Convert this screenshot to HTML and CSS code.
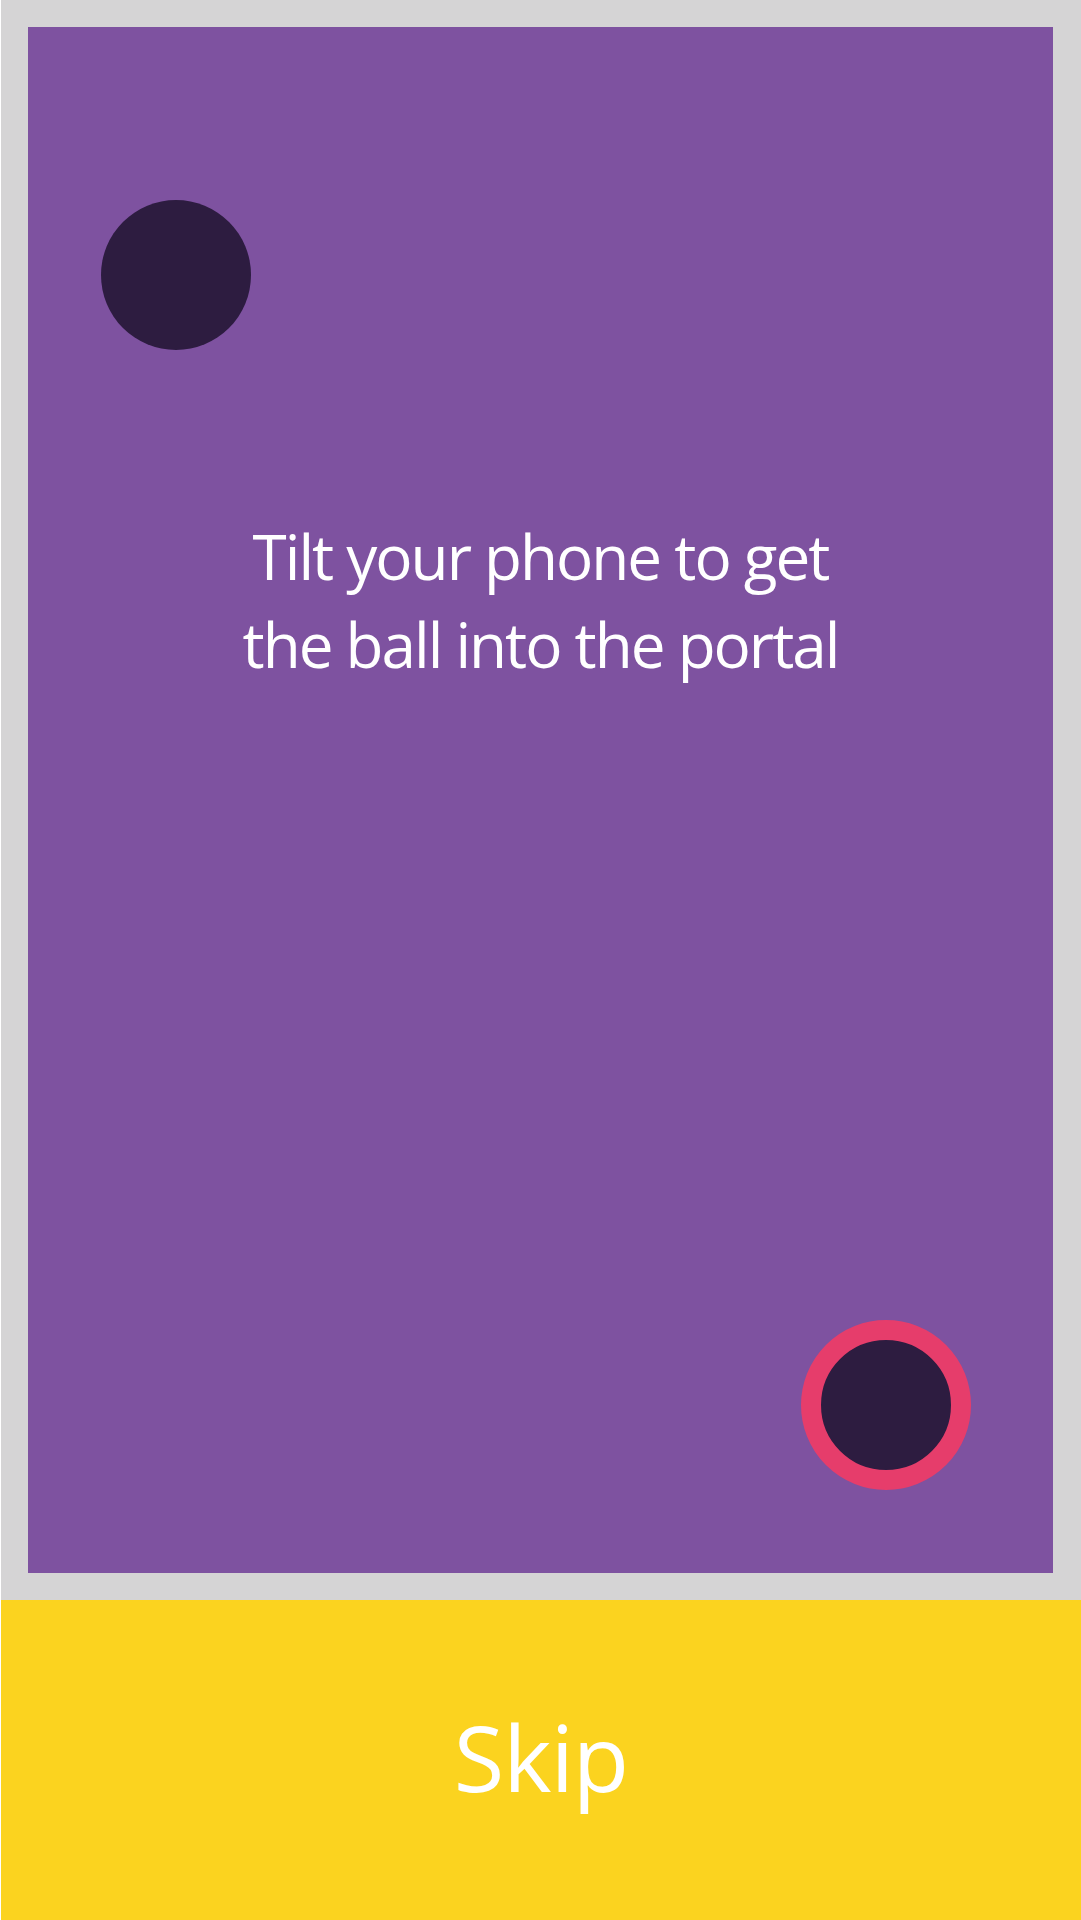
FILE: index.html
```html
<!DOCTYPE html>
<html>
<head>
<meta charset="utf-8">
<link rel="stylesheet" href="styles.css">
</head>
<body>
<div class="screen">
  <div class="frame">
    <div class="board">
      <div class="ball"></div>
      <p class="hint">Tilt your phone to get<br>the ball into the portal</p>
      <div class="portal"></div>
    </div>
  </div>
  <div class="skip">Skip</div>
</div>
</body>
</html>
```
FILE: styles.css
```css
html, body {
  margin: 0;
  padding: 0;
  background: #ffffff;
}
.screen {
  width: 1080px;
  height: 1920px;
  margin-left: 1px;
  display: flex;
  flex-direction: column;
  font-family: "Open Sans", "Noto Sans", sans-serif;
  color: #ffffff;
}
.frame {
  height: 1600px;
  box-sizing: border-box;
  background: #d5d4d5;
  padding: 27px 28px 27px 27px;
}
.board {
  position: relative;
  height: 100%;
  background: #7e52a0;
  overflow: hidden;
}
.hint {
  margin: 0;
  padding-top: 485px;
  text-align: center;
  font-size: 62px;
  line-height: 88px;
  letter-spacing: -2px;
}
.ball {
  position: absolute;
  left: 73px;
  top: 173px;
  width: 150px;
  height: 150px;
  border-radius: 50%;
  background: #2d1c40;
}
.portal {
  position: absolute;
  left: 773px;
  top: 1293px;
  width: 130px;
  height: 130px;
  border: 20px solid #e63d6b;
  border-radius: 50%;
  background: #2d1c40;
}
.skip {
  flex: 1;
  background: #fbd31f;
  display: flex;
  align-items: center;
  justify-content: center;
  font-size: 92px;
  letter-spacing: -1px;
  padding-bottom: 8px;
}
```
